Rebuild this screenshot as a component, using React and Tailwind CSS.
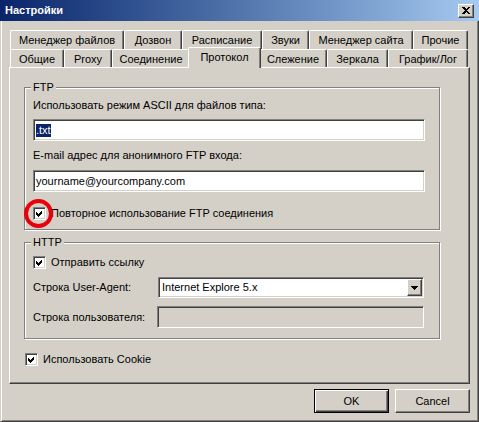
const font = "font-['Liberation_Sans','DejaVu_Sans',Arial,sans-serif]"

const sunken =
  'border border-t-[#808080] border-l-[#808080] border-b-white border-r-white shadow-[inset_1px_1px_0_#404040,inset_-1px_-1px_0_#d4d0c8]'
const raised =
  'border border-t-white border-l-white border-r-[#404040] border-b-[#404040] shadow-[inset_-1px_-1px_0_#808080]'

function Check({ checked = true }) {
  return (
    <div className={`w-[13px] h-[13px] shrink-0 bg-white flex items-center justify-center ${sunken}`}>
      {checked && (
        <svg width="9" height="9" viewBox="0 0 9 9" shapeRendering="crispEdges">
          <polygon points="1,3 3,5 7,1 7,4 3,8 1,6" fill="#000" />
        </svg>
      )}
    </div>
  )
}

function CheckRow({ label, className = '', children }) {
  return (
    <div className={`relative flex items-center gap-[5px] ${className}`}>
      <Check />
      <span className="leading-[13px]">{label}</span>
      {children}
    </div>
  )
}

function Group({ title, className = '', children }) {
  return (
    <div
      className={`relative border border-[#808080] shadow-[1px_1px_0_#fff,inset_1px_1px_0_#fff] ${className}`}
    >
      <span className="absolute -top-[7px] left-[6px] px-[2px] bg-[#d4d0c8] leading-[13px]">
        {title}
      </span>
      {children}
    </div>
  )
}

function Tab({ label, w, h }) {
  return (
    <div
      className={`${w} ${h} flex justify-center pt-[3px] leading-[13px] border-l border-t border-r border-l-white border-t-white border-r-[#404040] rounded-t-[2px] shadow-[inset_-1px_0_0_#808080]`}
    >
      {label}
    </div>
  )
}

function SelectedTab({ label, w }) {
  return (
    <div className={`${w} h-[18px] relative`}>
      <div className="absolute -left-[2px] -right-[2px] -top-[2px] -bottom-[1px] z-10 bg-[#d4d0c8] flex justify-center pt-[3px] leading-[13px] border-l border-t border-r border-l-white border-t-white border-r-[#404040] rounded-t-[2px] shadow-[inset_-1px_0_0_#808080]">
        {label}
      </div>
    </div>
  )
}

function Button({ label, primary }) {
  return (
    <div
      className={`w-[75px] h-[24px] flex items-center justify-center leading-[13px] ${
        primary
          ? 'border border-black shadow-[inset_1px_1px_0_#fff,inset_-1px_-1px_0_#404040,inset_-2px_-2px_0_#808080]'
          : raised
      }`}
    >
      {label}
    </div>
  )
}

export default function App() {
  return (
    <div className={`w-[479px] h-[422px] bg-[#d4d0c8] text-black text-[11px] flex flex-col ${font}`}>
      <div className="h-[21px] shrink-0 flex items-center justify-between pl-[5px] pr-[5px] bg-gradient-to-r from-[#0a246a] to-[#a6caf0]">
        <span className="text-white font-bold text-[11px] leading-[13px]">Настройки</span>
        <div className={`w-[16px] h-[14px] bg-[#d4d0c8] flex items-center justify-center ${raised}`}>
          <svg width="8" height="7" viewBox="0 0 8 7" shapeRendering="crispEdges">
            <path d="M0 0h2l2 2 2-2h2L5 3.5 8 7H6L4 5 2 7H0l3-3.5z" fill="#000" />
          </svg>
        </div>
      </div>

      <div className="flex-1 flex flex-col pt-[9px] px-[8px] border-l border-r border-b border-l-[#d4d0c8] border-r-[#404040] border-b-[#404040] shadow-[inset_1px_0_0_#fff,inset_-1px_-1px_0_#808080]">
        <div className="flex ml-[1px]">
          <Tab label="Менеджер файлов" w="w-[114px]" h="h-[19px]" />
          <Tab label="Дозвон" w="w-[58px]" h="h-[19px]" />
          <Tab label="Расписание" w="w-[80px]" h="h-[19px]" />
          <Tab label="Звуки" w="w-[47px]" h="h-[19px]" />
          <Tab label="Менеджер сайта" w="w-[104px]" h="h-[19px]" />
          <Tab label="Прочие" w="w-[55px]" h="h-[19px]" />
        </div>
        <div className="flex ml-[1px]">
          <Tab label="Общие" w="w-[54px]" h="h-[18px]" />
          <Tab label="Proxy" w="w-[48px]" h="h-[18px]" />
          <Tab label="Соединение" w="w-[78px]" h="h-[18px]" />
          <SelectedTab label="Протокол" w="w-[69px]" />
          <Tab label="Слежение" w="w-[68px]" h="h-[18px]" />
          <Tab label="Зеркала" w="w-[61px]" h="h-[18px]" />
          <Tab label="График/Лог" w="w-[80px]" h="h-[18px]" />
        </div>

        <div className={`h-[317px] flex flex-col pl-[14px] ${raised}`}>
          <Group title="FTP" className="mt-[19px] w-[416px] h-[143px] pl-[8px] pt-[11px]">
            <div className="leading-[13px]">Использовать режим ASCII для файлов типа:</div>
            <div className={`mt-[7px] w-[392px] h-[22px] bg-white flex items-center pl-[2px] ${sunken}`}>
              <span className="bg-[#0a246a] text-white leading-[13px]">.txt</span>
            </div>
            <div className="mt-[8px] leading-[13px]">E-mail адрес для анонимного FTP входа:</div>
            <div className={`mt-[8px] w-[392px] h-[22px] bg-white flex items-center pl-[2px] ${sunken}`}>
              <span className="leading-[13px]">yourname@yourcompany.com</span>
            </div>
            <CheckRow label="Повторное использование FTP соединения" className="mt-[15px]">
              <div className="absolute -left-[9px] -top-[8px] w-[29px] h-[29px] rounded-full border-[4px] border-[#e8000b]" />
            </CheckRow>
          </Group>

          <Group title="HTTP" className="mt-[12px] w-[416px] h-[97px] pl-[8px] pt-[13px]">
            <CheckRow label="Отправить ссылку" />
            <div className="mt-[8px] flex items-center">
              <span className="w-[125px] leading-[13px]">Строка User-Agent:</span>
              <div className={`w-[266px] h-[21px] bg-white flex items-center justify-between pl-[3px] pr-[1px] ${sunken}`}>
                <span className="leading-[13px]">Internet Explore 5.x</span>
                <div className={`w-[15px] h-[17px] bg-[#d4d0c8] flex items-center justify-center ${raised}`}>
                  <svg width="7" height="4" viewBox="0 0 7 4" shapeRendering="crispEdges">
                    <polygon points="0,0 7,0 3.5,4" fill="#000" />
                  </svg>
                </div>
              </div>
            </div>
            <div className="mt-[8px] flex items-center">
              <span className="w-[124px] leading-[13px]">Строка пользователя:</span>
              <div className={`w-[267px] h-[22px] ${sunken}`} />
            </div>
          </Group>

          <CheckRow label="Использовать Cookie" className="mt-[14px] ml-[1px]" />
        </div>

        <div className="mt-[5px] flex justify-end gap-[6px]">
          <Button label="OK" primary />
          <Button label="Cancel" />
        </div>
      </div>
    </div>
  )
}
